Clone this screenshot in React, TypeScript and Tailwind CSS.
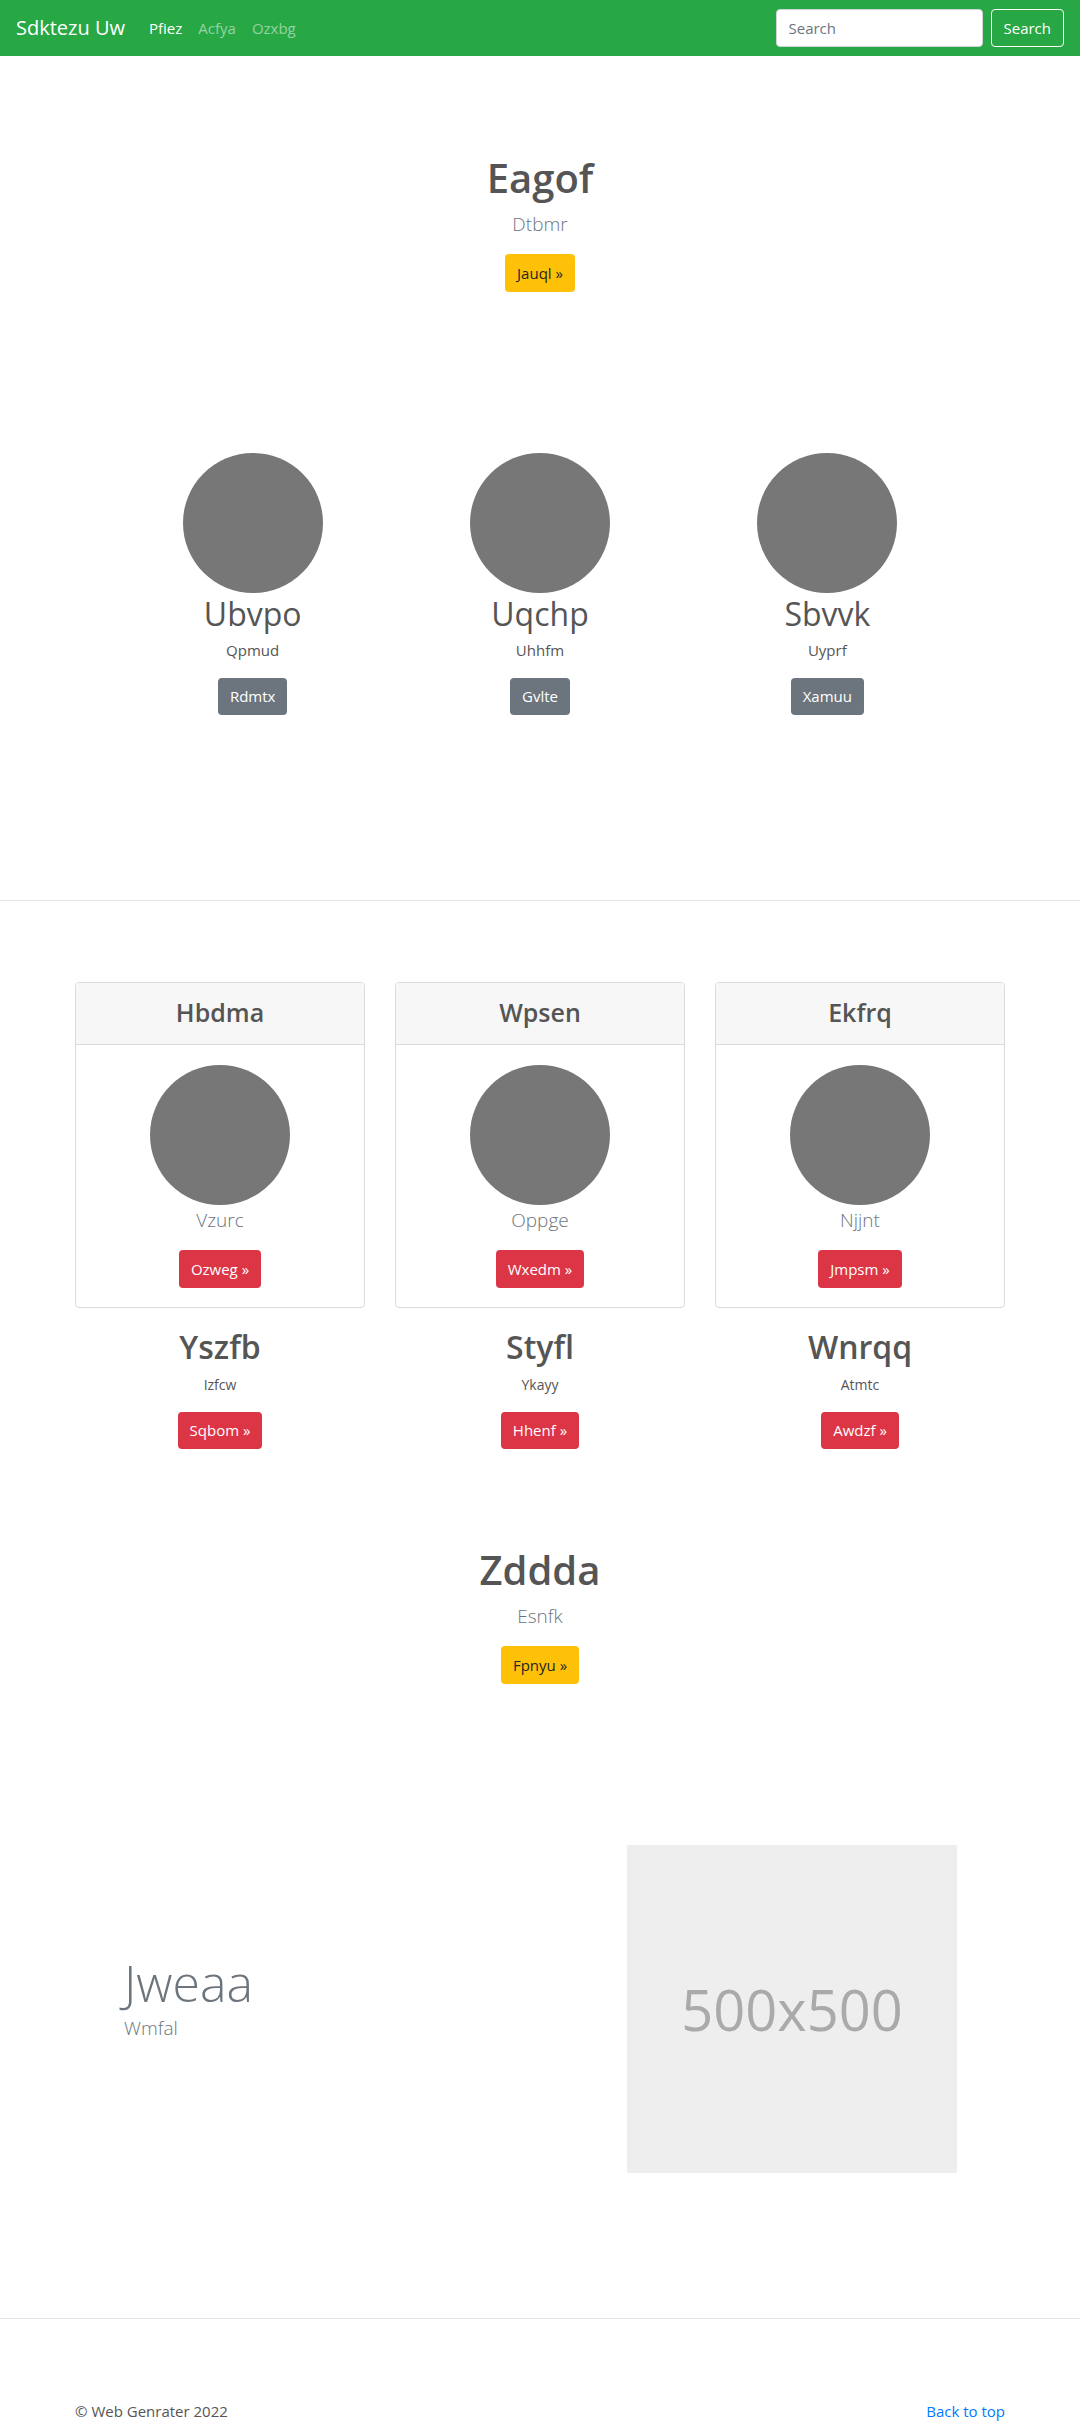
import React from 'react';

const FONT = "font-['Open_Sans','Noto_Sans',sans-serif]";

const circles = [
  { name: 'Ubvpo', sub: 'Qpmud', btn: 'Rdmtx' },
  { name: 'Uqchp', sub: 'Uhhfm', btn: 'Gvlte' },
  { name: 'Sbvvk', sub: 'Uyprf', btn: 'Xamuu' },
];

const cards = [
  { head: 'Hbdma', caption: 'Vzurc', btn: 'Ozweg', title: 'Yszfb', sub: 'Izfcw', btn2: 'Sqbom' },
  { head: 'Wpsen', caption: 'Oppge', btn: 'Wxedm', title: 'Styfl', sub: 'Ykayy', btn2: 'Hhenf' },
  { head: 'Ekfrq', caption: 'Njjnt', btn: 'Jmpsm', title: 'Wnrqq', sub: 'Atmtc', btn2: 'Awdzf' },
];

const Navbar: React.FC = () => (
  <nav className="h-[56px] bg-[#28a745] flex items-center px-4">
    <span className="text-[20px] text-white mr-[24px]">Sdktezu Uw</span>
    <div className="flex items-center gap-[16px] text-[15px]">
      <a className="text-white">Pfiez</a>
      <a className="text-white/50">Acfya</a>
      <a className="text-white/50">Ozxbg</a>
    </div>
    <div className="ml-auto flex items-center gap-[8px]">
      <input
        placeholder="Search"
        className="w-[207px] h-[38px] rounded-[4px] bg-white border border-[#ced4da] px-3 text-[15px] text-[#495057] placeholder:text-[#6c757d] outline-none"
      />
      <button className="h-[38px] px-[12px] rounded-[4px] border border-white text-white text-[15px]">
        Search
      </button>
    </div>
  </nav>
);

const Jumbo: React.FC<{ title: string; sub: string; btn: string }> = ({ title, sub, btn }) => (
  <div className="flex flex-col items-center">
    <h1 className="text-[40px] leading-[48px] font-semibold text-[#555]">{title}</h1>
    <p className="mt-[7px] text-[19px] leading-[30px] font-light text-[#6c757d]">{sub}</p>
    <button className="mt-[15px] h-[38px] px-[12px] rounded-[4px] bg-[#ffc107] text-[#212529] text-[15px]">
      {btn} »
    </button>
  </div>
);

export default function App() {
  return (
    <div className={`${FONT} bg-white text-[#555] min-h-[2424px]`}>
      <Navbar />

      {/* hero */}
      <section className="pt-[98px]">
        <Jumbo title="Eagof" sub="Dtbmr" btn="Jauql" />
      </section>

      {/* circles */}
      <section className="pt-[161px] pb-[185px]">
        <div className="w-[862px] mx-auto grid grid-cols-3">
          {circles.map((c) => (
            <div key={c.name} className="flex flex-col items-center">
              <div className="w-[140px] h-[140px] rounded-full bg-[#777]"></div>
              <h2 className="text-[32px] leading-[41px] text-[#555]">{c.name}</h2>
              <p className="mt-[4px] text-[15px] leading-[24px]">{c.sub}</p>
              <button className="mt-[16px] h-[37px] px-[12px] rounded-[4px] bg-[#6c757d] text-white text-[15px]">
                {c.btn}
              </button>
            </div>
          ))}
        </div>
      </section>

      <hr className="border-0 border-t border-[#e5e5e5]" />

      {/* cards */}
      <section className="pt-[81px]">
        <div className="w-[930px] mx-auto grid grid-cols-3 gap-[30px]">
          {cards.map((c) => (
            <div key={c.head} className="flex flex-col items-center">
              <div className="w-full border border-[#dcdcdc] rounded-[4px] overflow-hidden">
                <div className="h-[62px] bg-[#f7f7f7] border-b border-[#dcdcdc] flex items-center justify-center">
                  <h4 className="text-[25px] leading-[30px] font-semibold text-[#555] -mt-[3px]">{c.head}</h4>
                </div>
                <div className="pt-[20px] pb-[19px] flex flex-col items-center">
                  <div className="w-[140px] h-[140px] rounded-full bg-[#777]"></div>
                  <p className="text-[19px] leading-[30px] font-light text-[#6c757d]">{c.caption}</p>
                  <button className="mt-[15px] h-[38px] px-[12px] rounded-[4px] bg-[#dc3545] text-white text-[15px]">
                    {c.btn} »
                  </button>
                </div>
              </div>
              <h2 className="mt-[20px] text-[32px] leading-[38px] font-semibold text-[#555]">{c.title}</h2>
              <p className="mt-[7px] text-[14px] leading-[24px]">{c.sub}</p>
              <button className="mt-[15px] h-[37px] px-[12px] rounded-[4px] bg-[#dc3545] text-white text-[15px]">
                {c.btn2} »
              </button>
            </div>
          ))}
        </div>
      </section>

      <section className="pt-[97px]">
        <Jumbo title="Zddda" sub="Esnfk" btn="Fpnyu" />
      </section>

      {/* featurette */}
      <section className="pt-[161px] pb-[145px]">
        <div className="w-[930px] mx-auto flex items-center">
          <div className="w-[552px] pl-[49px] mb-[22px]">
            <h2 className="text-[50px] leading-[60px] font-light text-[#6c757d]">Jweaa</h2>
            <p className="text-[19px] leading-[30px] font-light text-[#6c757d]">Wmfal</p>
          </div>
          <div className="w-[330px] h-[328px] bg-[#eeeeee] flex items-center justify-center">
            <span className="text-[56px] text-[#aaaaaa]">500x500</span>
          </div>
        </div>
      </section>

      <hr className="border-0 border-t border-[#e5e5e5]" />

      <footer className="pt-[80px] pb-[40px]">
        <div className="w-[930px] mx-auto flex justify-between text-[15px] leading-[24px]">
          <span className="text-[#555]">© Web Genrater 2022</span>
          <a className="text-[#007bff]">Back to top</a>
        </div>
      </footer>
    </div>
  );
}
